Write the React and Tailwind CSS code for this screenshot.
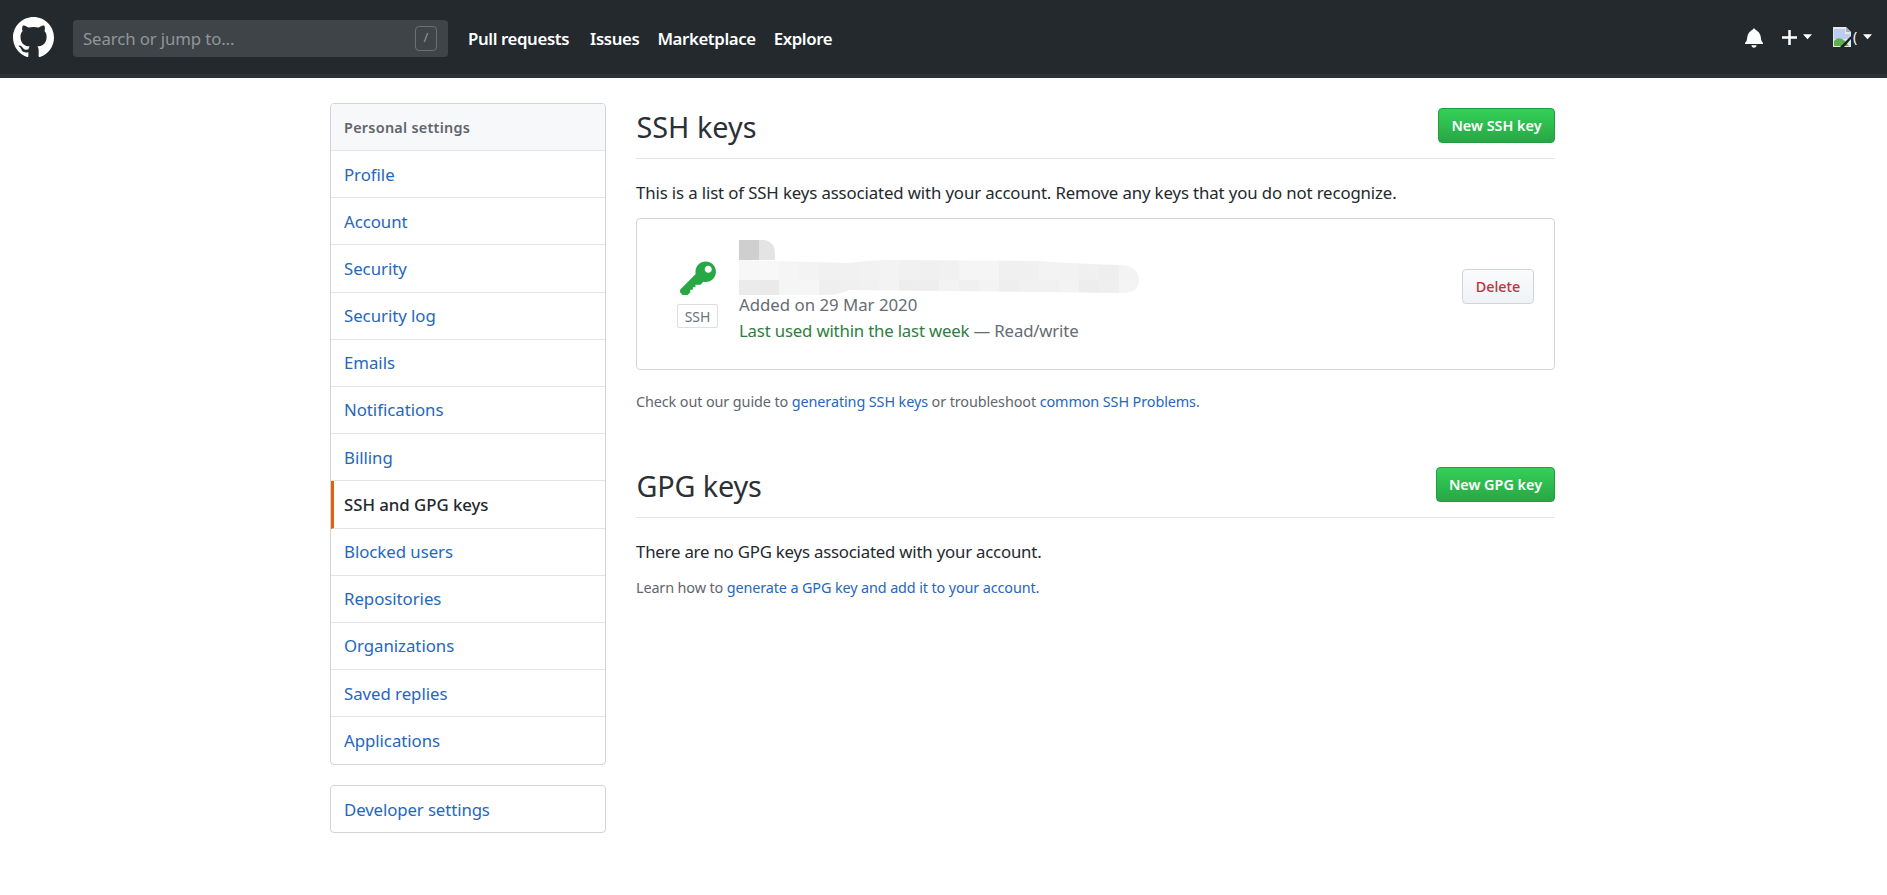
const items = ["Profile","Account","Security","Security log","Emails","Notifications","Billing","SSH and GPG keys","Blocked users","Repositories","Organizations","Saved replies","Applications"];
const font = { fontFamily: '"Noto Sans", sans-serif' };

function Caret({ className }) {
  return (
    <svg viewBox="0 0 10 6" className={className}><path d="M0 0h10L5 5.5z" fill="#fff" /></svg>
  );
}

const row2 = ["#f7f7f7","#f8f8f8","#f5f5f5","#f3f3f3","#f1f1f1","#f1f1f1","#f2f2f2","#f3f3f3","#f1f1f1","#f0f0f0","#f1f1f1","#f5f5f5","#f5f5f5","#f0f0f0","#f0f0f0","#f3f3f3","#f2f2f2","#f0f0f0","#eeeeee","#f3f3f3"];
const row3 = ["#ebebeb","#eaeaea","#f5f5f5","#f6f6f6","#efefef","#f0f0f0","#f1f1f1","#f3f3f3","#ededed","#eeeeee","#f3f3f3","#f0f0f0","#f3f3f3","#eeeeee","#f1f1f1","#f1f1f1","#f3f3f3","#ededed","#efefef","#f4f4f4"];

function Blur() {
  return (
    <svg width="400" height="55" viewBox="0 0 400 55" className="block">
      <defs>
        <clipPath id="band">
          <path d="M0 20 L110 23 Q130 20 150 20 L300 21 Q340 24 385 25 Q400 28 400 40 Q400 52 385 53 L110 50 Q100 55 88 55 H0Z" />
        </clipPath>
      </defs>
      <rect x="0" y="0" width="20" height="20" fill="#cfcfcf" />
      <path d="M20 0h6q10 2 10 14v6H20z" fill="#e4e4e4" />
      <g clipPath="url(#band)">
        {row2.map((c, i) => <rect key={i} x={i * 20} y="20" width="20" height="20" fill={c} />)}
        {row3.map((c, i) => <rect key={i} x={i * 20} y="40" width="20" height="15" fill={c} />)}
      </g>
    </svg>
  );
}

function GreenButton({ children, className }) {
  return (
    <button className={`h-[35px] rounded-[4px] border border-[#259a41] bg-gradient-to-b from-[#34d058] to-[#28a745] text-[14.4px] font-semibold text-white ${className}`}>{children}</button>
  );
}

export default function App() {
  return (
    <div style={font} className="min-h-[895px] bg-white text-[16.8px] text-[#24292e]">
      <header className="flex h-[78px] items-center border-b-4 border-[#2c3136] bg-[#24292e] pr-[15px] pl-[13px]">
        <svg viewBox="0 0 16 16" width="41" height="41" fill="#fff" className="shrink-0"><path d="M8 0C3.58 0 0 3.58 0 8c0 3.54 2.29 6.53 5.47 7.59.4.07.55-.17.55-.38 0-.19-.01-.82-.01-1.49-2.01.37-2.53-.49-2.69-.94-.09-.23-.48-.94-.82-1.13-.28-.15-.68-.52-.01-.53.63-.01 1.08.58 1.23.82.72 1.21 1.87.87 2.33.66.07-.52.28-.87.51-1.07-1.78-.2-3.64-.89-3.64-3.95 0-.87.31-1.59.82-2.15-.08-.2-.36-1.02.08-2.12 0 0 .67-.21 2.2.82.64-.18 1.32-.27 2-.27.68 0 1.36.09 2 .27 1.53-1.04 2.2-.82 2.2-.82.44 1.1.16 1.92.08 2.12.51.56.82 1.27.82 2.15 0 3.07-1.87 3.75-3.65 3.95.29.25.54.73.54 1.48 0 1.07-.01 1.93-.01 2.2 0 .21.15.46.55.38A8.013 8.013 0 0 0 16 8c0-4.42-3.58-8-8-8z" /></svg>
        <div className="mt-[2px] ml-[19px] flex h-[37px] w-[375px] items-center justify-between rounded-[4px] bg-[#3f4448] pr-[11px] pl-[10px]">
          <span className="pt-[2px] text-[16.8px] tracking-[-0.12px] text-[#90969b]">Search or jump to...</span>
          <span className="flex h-[25px] w-[22px] items-center justify-center rounded-[4px] border border-[#6a6f74] text-[13px] text-[#90969b]">/</span>
        </div>
        <nav className="mt-[3px] ml-[20px] flex font-semibold tracking-[-0.38px] text-white">
          <span>Pull requests</span><span className="ml-[21px]">Issues</span><span className="ml-[18px]">Marketplace</span><span className="ml-[18px]">Explore</span>
        </nav>
        <div className="ml-auto flex items-center">
          <svg viewBox="0 0 14 16" width="18" height="21" fill="#fff"><path d="M14 12v1H0v-1l.73-.58c.77-.77.81-2.55 1.19-4.42C2.69 3.23 6 2 6 2c0-.55.45-1 1-1s1 .45 1 1c0 0 3.39 1.23 4.16 5 .38 1.88.42 3.66 1.19 4.42l.66.58H14zm-7 4c1.11 0 2-.89 2-2H5c0 1.11.89 2 2 2z" /></svg>
          <svg viewBox="0 0 12 12" width="15" height="15" fill="#fff" className="ml-[19px]"><path d="M12 7H7v5H5V7H0V5h5V0h2v5h5v2z" /></svg>
          <Caret className="ml-[6px] h-[6px] w-[9px]" />
          <svg viewBox="0 0 20 20" width="20" height="20" className="ml-[20px]">
            <path d="M1 0h13l5 5v15H1z" fill="#e8e8ea" />
            <path d="M2 2h11v5h5v5H2z" fill="#b9cdf5" />
            <path d="M2 19v-5c4-4 7-3 11 0l4 5z" fill="#5db04e" />
            <path d="M8 20L19 9v3l-7 8z" fill="#1c2022" />
            <path d="M14 0v5h5z" fill="#a9acb0" />
          </svg>
          <span className="ml-[1px] w-[6px] text-[14px] leading-none text-white">(</span>
          <Caret className="ml-[4px] h-[6px] w-[9px]" />
        </div>
      </header>

      <main className="ml-[330px] flex w-[1225px] gap-[30px] pt-[25px]">
        <aside className="w-[276px] shrink-0">
          <div className="overflow-hidden rounded-[4px] border border-[#d1d5da]">
            <div className="flex h-[47px] items-center border-b border-[#e1e4e8] bg-[#f6f8fa] pt-[1px] pl-[13px] text-[14.4px] font-semibold tracking-[0.28px] text-[#5f666d]">Personal settings</div>
            {items.map((t, i) => {
              const active = t === "SSH and GPG keys";
              return (
                <div key={t} className={`flex h-[47.2px] items-center tracking-[-0.03px] ${i < items.length - 1 ? "border-b border-[#e1e4e8]" : ""} ${active ? "border-l-[3px] border-l-[#e36209] pl-[10px] font-medium text-[#24292e]" : "pl-[13px] text-[#2567bd]"}`}>{t}</div>
              );
            })}
          </div>
          <div className="mt-[20px] flex h-[48px] items-center rounded-[4px] border border-[#d1d5da] pl-[13px] tracking-[-0.1px] text-[#2567bd]">Developer settings</div>
        </aside>

        <section className="w-[919px]">
          <div className="flex h-[56px] items-start justify-between border-b border-[#e1e4e8]">
            <h1 className="pl-[0.5px] text-[28.8px] leading-[48px] font-normal text-[#2b3035]">SSH keys</h1>
            <GreenButton className="mt-[5px] w-[117px]">New SSH key</GreenButton>
          </div>
          <p className="mt-[21px] leading-[26px] tracking-[-0.12px]">This is a list of SSH keys associated with your account. Remove any keys that you do not recognize.</p>
          <div className="mt-[12px] flex h-[152px] items-start rounded-[4px] border border-[#d1d5da]">
            <div className="mt-[40px] ml-[40px] flex w-[41px] flex-col items-center">
              <svg viewBox="0 0 14 16" width="36" height="41" fill="#28a745"><path d="M12.83 2.17C12.08 1.42 11.14 1.03 10 1c-1.13.03-2.08.42-2.83 1.17S6.04 3.86 6.01 5c0 .3.03.59.09.89L0 12v1l1 1h2l1-1v-1h1v-1h1v-1h2l1.09-1.11c.3.08.59.11.91.11 1.14-.03 2.08-.42 2.83-1.17S13.97 6.14 14 5c-.03-1.14-.42-2.08-1.17-2.83zM11 5.38c-.77 0-1.38-.61-1.38-1.38 0-.77.61-1.38 1.38-1.38.77 0 1.38.61 1.38 1.38 0 .77-.61 1.38-1.38 1.38z" /></svg>
              <span className="mt-[4px] flex h-[24px] w-[41px] items-center justify-center rounded-[2px] border border-[#dcdfe3] text-[14px] tracking-[-0.1px] text-[#6a737d]">SSH</span>
            </div>
            <div className="mt-[21px] ml-[21px] flex-1">
              <Blur />
              <div className="-mt-[3px] leading-[26px] text-[#666c73]">Added on 29 Mar 2020</div>
              <div className="leading-[26px] tracking-[-0.18px] text-[#666c73]"><span className="text-[#2f7d42]">Last used within the last week</span> — Read/write</div>
            </div>
            <button className="mt-[50px] mr-[20px] h-[35px] w-[72px] rounded-[4px] border border-[#d1d5da] bg-gradient-to-b from-[#fafbfc] to-[#eff3f6] text-[14.4px] font-medium text-[#c4303c]">Delete</button>
          </div>
          <p className="mt-[20px] text-[14.4px] leading-[24px] tracking-[-0.1px] text-[#5f666d]">Check out our guide to <span className="text-[#2567bd]">generating SSH keys</span> or troubleshoot <span className="text-[#2567bd]">common SSH Problems</span>.</p>

          <div className="mt-[48px] flex h-[56px] items-start justify-between border-b border-[#e1e4e8]">
            <h2 className="pl-[0.5px] text-[28.8px] leading-[48px] font-normal tracking-[-0.15px] text-[#2b3035]">GPG keys</h2>
            <GreenButton className="mt-[5px] w-[119px]">New GPG key</GreenButton>
          </div>
          <p className="mt-[21px] leading-[26px] tracking-[-0.2px]">There are no GPG keys associated with your account.</p>
          <p className="mt-[11px] text-[14.4px] leading-[24px] tracking-[-0.12px] text-[#5f666d]">Learn how to <span className="text-[#2567bd]">generate a GPG key and add it to your account.</span></p>
        </section>
      </main>
    </div>
  );
}
